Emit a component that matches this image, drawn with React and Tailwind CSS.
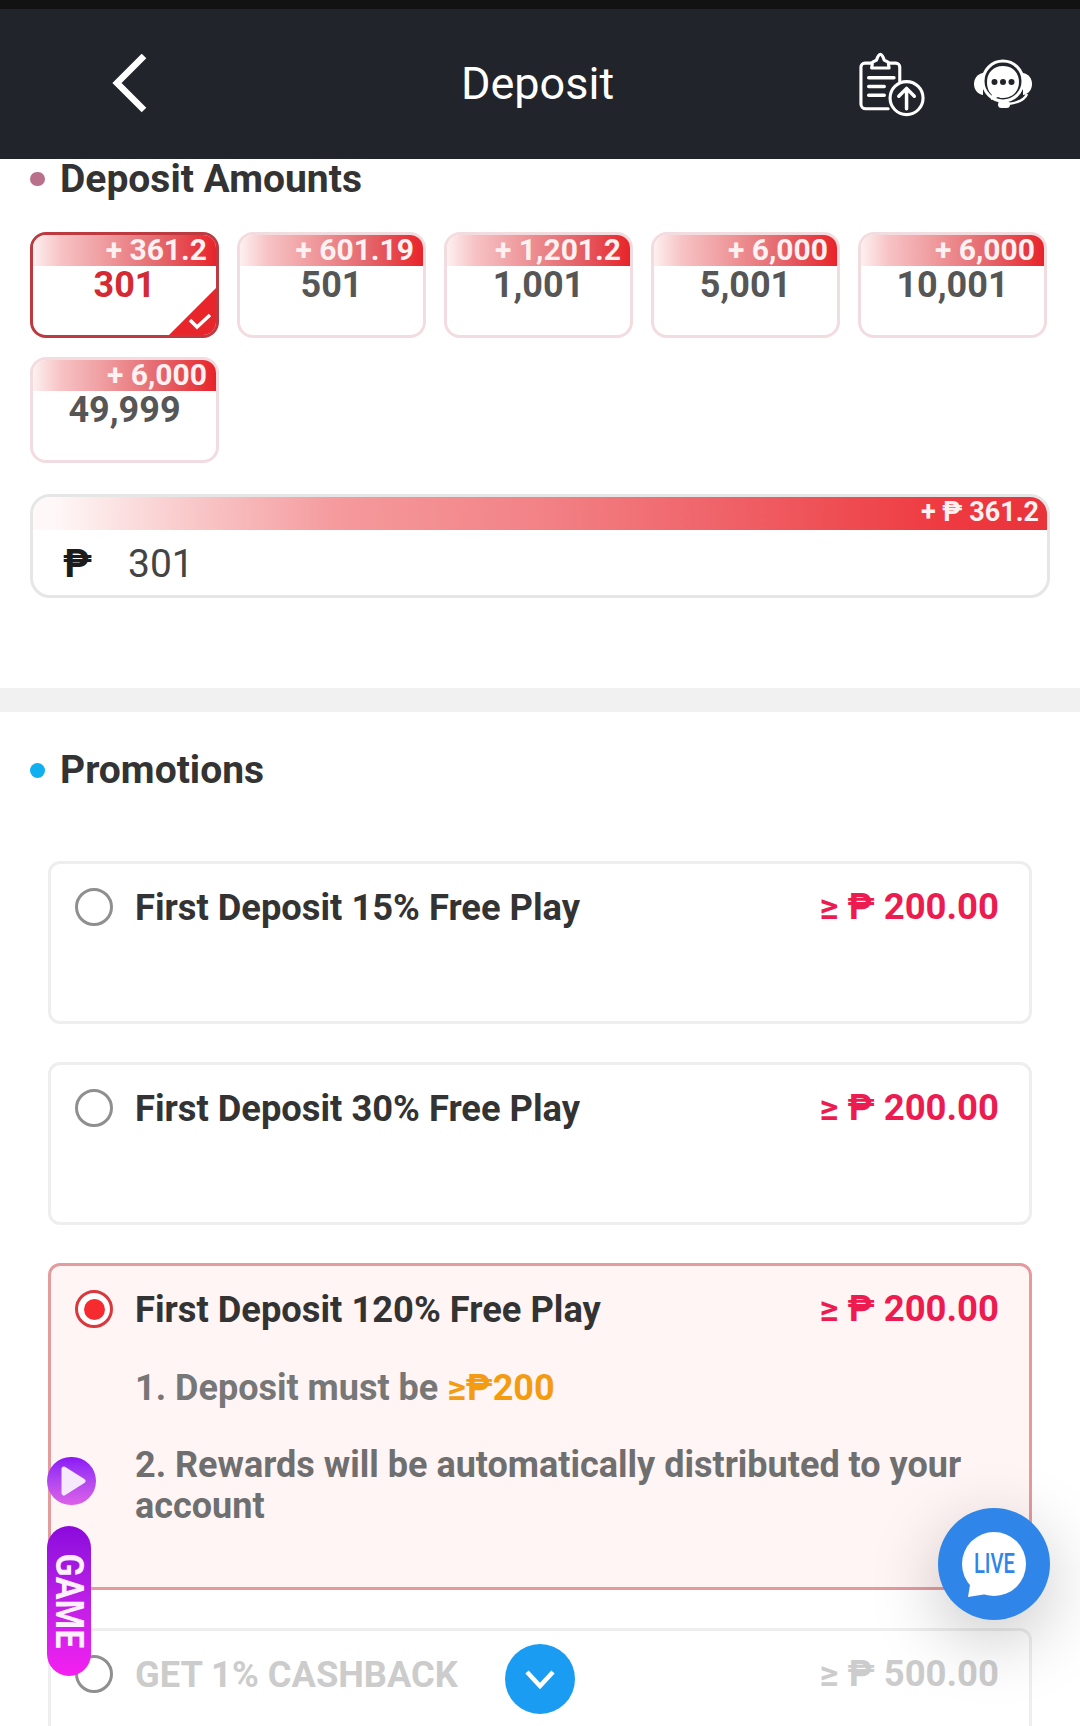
const amounts = [
  { bonus: "+ 361.2", value: "301", selected: true },
  { bonus: "+ 601.19", value: "501" },
  { bonus: "+ 1,201.2", value: "1,001" },
  { bonus: "+ 6,000", value: "5,001" },
  { bonus: "+ 6,000", value: "10,001" },
  { bonus: "+ 6,000", value: "49,999" },
];

function BackIcon() {
  return (
    <svg width="36" height="60" viewBox="0 0 36 60" fill="none">
      <path d="M33 2 L6 29 L33 56" stroke="#fff" strokeWidth="6.5" />
    </svg>
  );
}

function ClipboardIcon() {
  return (
    <svg width="66" height="65" viewBox="0 0 68 66" fill="none" stroke="#fff" strokeLinecap="round" strokeLinejoin="round">
      <path d="M42 34 V15 a4 4 0 0 0 -4 -4 H6 a4 4 0 0 0 -4 4 V53 a5 5 0 0 0 5 5 H30" strokeWidth="3.2" />
      <path d="M13 16 H31 L30 10 L26 8 Q24 2 22 2 Q20 2 18 8 L14 10 Z" fill="#22242c" strokeWidth="3.2" />
      <path d="M10 26 H36 M10 35 H26 M10 44 H26" strokeWidth="3.6" />
      <circle cx="49" cy="47" r="17" strokeWidth="3.2" fill="#22242c" />
      <path d="M49 58 V38 M41 45 L49 37 L57 45" strokeWidth="3.6" />
    </svg>
  );
}

function SupportIcon() {
  return (
    <svg width="58" height="50" viewBox="0 0 58 50" fill="none">
      <circle cx="29" cy="22" r="20" stroke="#fff" strokeWidth="3" />
      <path d="M9 14 C3 15 0 20 0 25 C0 30 3 35 9 36 Z" fill="#fff" />
      <path d="M49 14 C55 15 58 20 58 25 C58 30 55 35 49 36 Z" fill="#fff" />
      <path d="M29 7 C19 7 13 14 13 23 C13 29 15 33 18 36 L17 41 L24 38 C26 39 27 39 29 39 C39 39 45 32 45 23 C45 14 39 7 29 7 Z" fill="#fff" />
      <circle cx="20.5" cy="23" r="3" fill="#22242c" />
      <circle cx="29" cy="23" r="3" fill="#22242c" />
      <circle cx="37.5" cy="23" r="3" fill="#22242c" />
      <path d="M53 35 Q50 43 34 45" stroke="#fff" strokeWidth="2.5" />
      <rect x="24" y="42" width="12" height="7" rx="3.5" fill="#fff" />
    </svg>
  );
}

function AmountCard({ bonus, value, selected }) {
  return (
    <div className={`relative h-[106px] overflow-hidden rounded-[16px] border-[3px] bg-white ${selected ? "border-[#bd3a40]" : "border-[#f3dce0]"}`}>
      <div className="flex h-[31px] items-center justify-end bg-[linear-gradient(90deg,#fdf0f0_0%,#f7c3c5_15%,#ef9a9d_40%,#e4666b_70%,#e8232a_100%)] pb-[1px] pr-[9px] text-[30px] font-bold leading-none text-[#fff1f1]">
        {bonus}
      </div>
      <div className={`text-center text-[36px] font-bold leading-[38px] ${selected ? "text-[#d32a33]" : "text-[#565656]"}`}>
        {value}
      </div>
      {selected && (
        <svg className="absolute bottom-0 right-0" width="47" height="47" viewBox="0 0 47 47">
          <path d="M47 0 V47 H0 Z" fill="#e8252a" />
          <path d="M21 32 L28 39 L41 27" stroke="#fff" strokeWidth="3.5" fill="none" />
        </svg>
      )}
    </div>
  );
}

function Radio({ checked }) {
  return (
    <span className={`flex h-[38px] w-[38px] shrink-0 items-center justify-center rounded-full border-[3px] bg-white ${checked ? "border-[#d9383c]" : "border-[#8f8f8f]"}`}>
      {checked && <span className="h-[21px] w-[21px] rounded-full bg-[#f62b2f]" />}
    </span>
  );
}

function Promo({ title, min, checked, muted, tall, children }) {
  return (
    <div className={`rounded-[12px] border-[3px] pl-[24px] pr-[30px] pt-[23px] ${checked ? "border-[#e39b9e] bg-[#fff5f5]" : "border-[#eeeeee] bg-white"} ${tall ? "h-[327px]" : "h-[163px]"}`}>
      <div className="flex h-[40px] items-center">
        <Radio checked={checked} />
        <span className={`ml-[22px] pt-[2px] text-[36.3px] font-bold leading-none ${muted ? "text-[#cccccc]" : "text-[#333333]"}`}>{title}</span>
        <span className={`ml-auto text-[36.5px] font-bold leading-none ${muted ? "text-[#cccccc]" : "text-[#ec1c50]"}`}>
          <span>≥</span> ₱ {min}
        </span>
      </div>
      {children}
    </div>
  );
}

export default function App() {
  return (
    <div className="relative h-[1726px] w-[1080px] overflow-hidden bg-white font-['Roboto',sans-serif]">
      <div className="h-[9px] bg-[#121212]" />
      <header className="relative flex h-[150px] items-center justify-between bg-[#22242c] pl-[111px] pr-[48px]">
        <BackIcon />
        <h1 className="absolute left-0 right-[5px] pb-[2px] text-center text-[45px] font-normal leading-none text-white">Deposit</h1>
        <div className="flex items-center gap-[49px]">
          <ClipboardIcon />
          <SupportIcon />
        </div>
      </header>

      <section className="h-[529px] px-[30px]">
        <div className="flex h-[40px] items-center">
          <span className="h-[14px] w-[15px] rounded-full bg-[#b8708b]" />
          <h2 className="ml-[15px] text-[39px] font-bold leading-none text-[#333333]">Deposit Amounts</h2>
        </div>
        <div className="mt-[33px] grid w-[1017px] grid-cols-5 gap-x-[18px] gap-y-[19px]">
          {amounts.map((a) => (
            <AmountCard key={a.value} {...a} />
          ))}
        </div>
        <div className="mt-[31px] h-[104px] overflow-hidden rounded-[20px] border-[3px] border-[#e6e6e6] bg-white">
          <div className="flex h-[33px] items-center justify-end bg-[linear-gradient(90deg,#fff8f8_2%,#f9cacb_15%,#f59a9d_30%,#f28286_50%,#ef5f65_70%,#ee3a40_90%,#e8333a_100%)] pb-[3px] pr-[8px] text-[27px] font-bold leading-none text-[#fff1f1]">
            + ₱ 361.2
          </div>
          <div className="flex h-[62px] items-center pl-[30px] pt-[6px] text-[39px] leading-none text-[#444444]">
            <span className="w-[65px] font-bold text-[#1c1c1c]">₱</span>
            <span>301</span>
          </div>
        </div>
      </section>

      <div className="h-[24px] bg-[#f1f1f1]" />

      <section className="pt-[38px]">
        <div className="flex h-[40px] items-center px-[30px]">
          <span className="h-[15px] w-[15px] rounded-full bg-[#10b0f0]" />
          <h2 className="ml-[15px] text-[39px] font-bold leading-none text-[#333333]">Promotions</h2>
        </div>
        <div className="mt-[71px] flex flex-col gap-[38px] pl-[48px] pr-[48px]">
          <Promo title="First Deposit 15% Free Play" min="200.00" />
          <Promo title="First Deposit 30% Free Play" min="200.00" />
          <Promo title="First Deposit 120% Free Play" min="200.00" checked tall>
            <div className="pl-[60px] pt-[39px] text-[36px] font-bold leading-[41px] text-[#777777]">
              <p className="h-[41px]">1. Deposit must be <span className="text-[#f39c12]">≥₱200</span></p>
              <p className="mt-[36px] text-[#6f6f6f]">2. Rewards will be automatically distributed to your account</p>
            </div>
          </Promo>
          <Promo title="GET 1% CASHBACK" min="500.00" muted />
        </div>
      </section>

      {/* floating play button */}
      <div className="absolute left-[47px] top-[1457px] flex h-[48px] w-[49px] items-center justify-center rounded-full bg-gradient-to-b from-[#8a12f5] to-[#dd60e8]">
        <svg className="ml-[4px]" width="26" height="30" viewBox="0 0 26 30"><path d="M3 3 L22 15 L3 27 Z" fill="#f5e9fb" stroke="#f5e9fb" strokeWidth="5" strokeLinejoin="round" /></svg>
      </div>

      {/* floating game tab */}
      <div className="absolute left-[47px] top-[1526px] flex h-[150px] w-[44px] items-center justify-center rounded-full bg-gradient-to-b from-[#8a08dc] to-[#f41ff0]">
        <span className="whitespace-nowrap text-[34px] font-bold leading-none text-[#fdeffd] [transform:rotate(90deg)_scaleY(1.15)]">GAME</span>
      </div>

      {/* scroll-down button */}
      <div className="absolute left-[505px] top-[1644px] flex h-[70px] w-[70px] items-center justify-center rounded-full bg-[#1a9cf2]">
        <svg width="32" height="20" viewBox="0 0 32 20" fill="none"><path d="M3 3 L16 17 L29 3" stroke="#fff" strokeWidth="4.5" /></svg>
      </div>

      {/* live chat */}
      <div className="absolute left-[938px] top-[1508px] flex h-[112px] w-[112px] items-center justify-center rounded-full bg-[#2f86e8] shadow-[0_20px_70px_rgba(0,0,0,0.22)]">
        <svg className="absolute left-[21px] top-[21px]" width="70" height="72" viewBox="0 0 70 72">
          <circle cx="35" cy="35" r="32" fill="#fff" />
          <path d="M12 50 L9 68 L34 64 Z" fill="#fff" />
        </svg>
        <span className="relative text-[28px] font-medium leading-none text-[#2f86e8] [transform:scaleX(0.72)]">LIVE</span>
      </div>
    </div>
  );
}
